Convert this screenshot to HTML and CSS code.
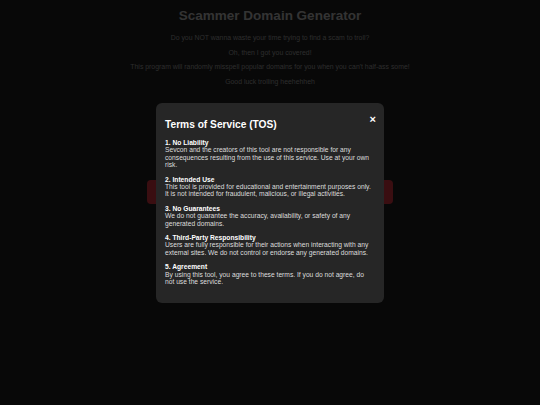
FILE: index.html
```html
<!DOCTYPE html>
<html lang="en">
<head>
  <meta charset="UTF-8">
  <meta name="viewport" content="width=device-width, initial-scale=1.0">
  <title>Scammer Domain Generator</title>
  <link rel="stylesheet" href="styles.css">
</head>
<body>
  <main class="page">
    <h1>Scammer Domain Generator</h1>
    <p>Do you NOT wanna waste your time trying to find a scam to troll?</p>
    <p>Oh, then I got you covered!</p>
    <p>This program will randomly misspell popular domains for you when you can't half-ass some!</p>
    <p>Good luck trolling heehehheh</p>

    <button class="generate" id="generateBtn">Generate Domain</button>
    <div class="output" id="output"></div>
  </main>

  <div class="overlay" id="tosOverlay">
    <div class="modal">
      <button class="close" onclick="closeTos()">&times;</button>
      <h2>Terms of Service (TOS)</h2>
      <p><strong>1. No Liability</strong><br>Sevcon and the creators of this tool are not responsible for any consequences resulting from the use of this service. Use at your own risk.</p>
      <p><strong>2. Intended Use</strong><br>This tool is provided for educational and entertainment purposes only. It is not intended for fraudulent, malicious, or illegal activities.</p>
      <p><strong>3. No Guarantees</strong><br>We do not guarantee the accuracy, availability, or safety of any generated domains.</p>
      <p><strong>4. Third-Party Responsibility</strong><br>Users are fully responsible for their actions when interacting with any external sites. We do not control or endorse any generated domains.</p>
      <p><strong>5. Agreement</strong><br>By using this tool, you agree to these terms. If you do not agree, do not use the service.</p>
    </div>
  </div>

  <script>
    function closeTos() {
      document.getElementById('tosOverlay').style.display = 'none';
    }
  </script>
</body>
</html>
```

FILE: styles.css
```css
body {
  margin: 0;
  font-family: 'Liberation Sans', Arial, sans-serif;
  background: #202020;
  color: #b0b0b0;
}
.page {
  display: flex;
  flex-direction: column;
  align-items: center;
  text-align: center;
  padding-top: 8px;
}
h1 {
  font-size: 13.5px;
  color: #ccc;
  margin: 0 0 7px;
  line-height: 16px;
}
.page p {
  font-size: 6.9px;
  margin: 0;
  line-height: 14.6px;
}
.generate {
  margin-top: 91px;
  width: 246px;
  height: 24px;
  border: none;
  border-radius: 4px;
  background: #e63946;
  color: #fff;
  font-family: inherit;
  font-size: 8px;
  font-weight: bold;
}
.overlay {
  position: fixed;
  inset: 0;
  background: rgba(0, 0, 0, 0.75);
  display: flex;
  justify-content: center;
  align-items: center;
}
.modal {
  position: relative;
  width: 210px;
  padding: 10px 9px 17px 9px;
  background: #262626;
  border-radius: 6px;
  color: #ddd;
  text-align: left;
}
.modal h2 {
  font-size: 10.2px;
  line-height: 11.5px;
  margin: 6px 0 9px;
  color: #fff;
}
.modal p {
  font-size: 6.7px;
  line-height: 7.4px;
  margin: 0 0 7px;
}
.modal p:last-child {
  margin-bottom: 0;
}
.modal strong {
  color: #fff;
}
.close {
  position: absolute;
  top: 10px;
  right: 8px;
  background: none;
  border: none;
  color: #fff;
  font-size: 11px;
  font-weight: bold;
  cursor: pointer;
  padding: 0;
}
```
